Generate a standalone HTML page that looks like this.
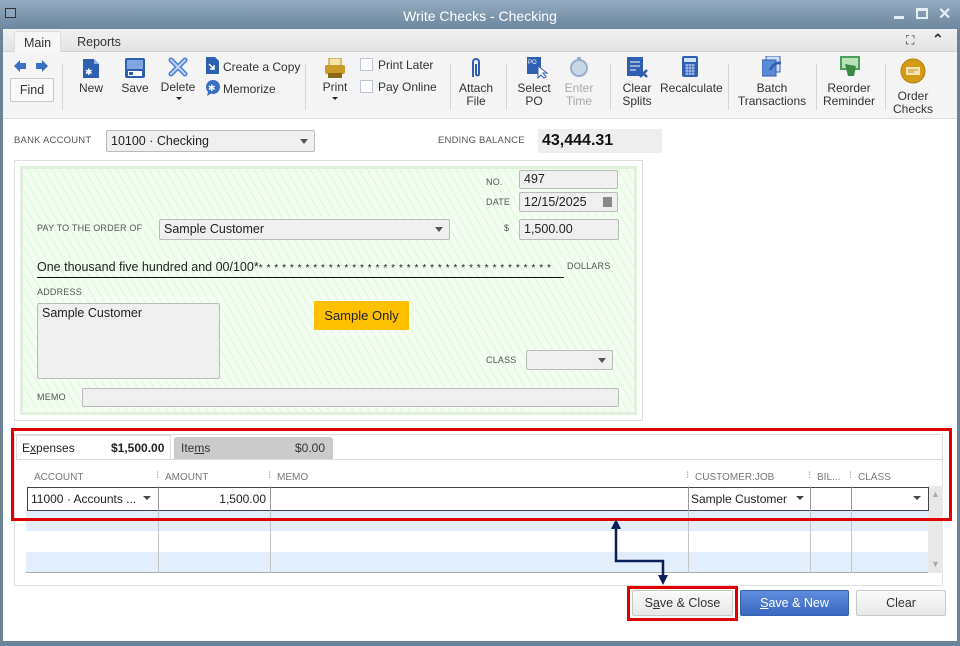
<!DOCTYPE html>
<html><head><meta charset="utf-8">
<style>
*{box-sizing:border-box;margin:0;padding:0}
body{width:960px;height:646px;overflow:hidden;font-family:"Liberation Sans",sans-serif;background:#6b8399;position:relative;font-size:12px;color:#222}
.abs{position:absolute}
#title{left:0;top:0;width:960px;height:29px;background:linear-gradient(#93abc0,#6d879e);color:#fff;font-size:14px;text-align:center;line-height:32px}
#win{left:3px;top:29px;width:954px;height:612px;background:#fff}
#tabs{left:0;top:0;width:954px;height:23px;background:linear-gradient(#f1f1f1,#e3e3e3);border-bottom:1px solid #c9d3dc}
.tab{position:absolute;top:2px;height:22px;font-size:12.5px;line-height:22px;text-align:center;color:#333}
#tb{left:0;top:23px;width:954px;height:67px;background:#f4f4f4;border-bottom:1px solid #ddd}
.lbl{position:absolute;font-size:12px;color:#333;text-align:center;line-height:13px}
.sep{position:absolute;top:12px;width:1px;height:46px;background:#d4d4d4}
.ic{position:absolute}
.small{font-size:9px;color:#555;position:absolute;letter-spacing:.2px}
.fld{position:absolute;background:#efefef;border:1px solid #bbb;border-radius:2px;font-size:12.5px;padding-left:4px;line-height:18px}
.dd{position:absolute;right:6px;top:7px;width:0;height:0;border-left:4px solid transparent;border-right:4px solid transparent;border-top:5px solid #555}
#check{left:11px;top:131px;width:629px;height:261px;border:1px solid #ddd;background:#fff}
#green{left:5px;top:5px;width:617px;height:249px;border:3px solid #e0f0dc;background:#f3fdf1;background-image:repeating-linear-gradient(60deg,transparent 0 6px,rgba(190,235,185,.35) 6px 7px);}
.btn{position:absolute;height:26px;border:1px solid #c8c8c8;border-radius:2px;background:linear-gradient(#fafafa,#e8e8e8);text-align:center;line-height:24px;font-size:12.5px;color:#333}
.hdr{position:absolute;top:469px;font-size:10px;color:#777}
</style></head><body>
<div id="title" class="abs">Write Checks - Checking</div>
<div class="abs" style="left:5px;top:8px;width:11px;height:10px;border:1px solid #333;background:#8ea6bb"></div>
<div class="abs" style="left:894px;top:16px;width:10px;height:3px;background:#e6edf3"></div>
<div class="abs" style="left:916px;top:8px;width:12px;height:11px;border:2px solid #e6edf3;border-top-width:3px"></div>
<div class="abs" style="left:938px;top:4px;color:#e6edf3;font-size:16px;font-weight:bold">✕</div>
<div id="win" class="abs">
 <div id="tabs" class="abs">
  <div class="tab" style="left:11px;width:47px;background:#f6f6f6;border:1px solid #ddd;border-bottom:none;border-radius:3px 3px 0 0">Main</div>
  <div class="tab" style="left:68px;width:56px">Reports</div>
  <div class="abs" style="left:903px;top:4px;font-size:12px;color:#333">⛶</div>
  <div class="abs" style="left:929px;top:2px;font-size:14px;color:#333;font-weight:bold">⌃</div>
 </div>
 <div id="tb" class="abs">
  <svg class="ic" style="left:11px;top:7px" width="36" height="14"><path d="M0 7 L6 1 V4 H12 V10 H6 V13Z" fill="#3a70c4"/><path d="M36 7 L30 1 V4 H24 V10 H30 V13Z" fill="#3a70c4" transform="translate(-2 0)"/></svg>
  <div class="btn" style="left:7px;top:26px;width:44px;height:24px;line-height:22px;background:#f8f8f8">Find</div>
  <div class="sep" style="left:59px"></div>
  <svg class="ic" style="left:79px;top:6px" width="18" height="21"><path d="M1 1H12L17 6V20H1Z" fill="#2f5fb0"/><path d="M12 1V6H17" fill="#8fb0e0"/><text x="3" y="17" fill="#fff" font-size="9">✱</text></svg>
  <div class="lbl" style="left:70px;top:30px;width:36px">New</div>
  <svg class="ic" style="left:122px;top:6px" width="20" height="20"><rect x="0" y="0" width="20" height="20" rx="2" fill="#2f5fb0"/><rect x="2" y="2" width="16" height="9" fill="#7fa6e0"/><rect x="3" y="13" width="14" height="5" fill="#fff"/><rect x="4" y="14" width="4" height="3" fill="#2f5fb0"/></svg>
  <div class="lbl" style="left:114px;top:30px;width:36px">Save</div>
  <svg class="ic" style="left:165px;top:5px" width="20" height="20"><path d="M3 3L17 17M17 3L3 17" stroke="#4a7fd0" stroke-width="5" stroke-linecap="round"/><path d="M3 3L17 17M17 3L3 17" stroke="#bcd3f5" stroke-width="2" stroke-linecap="round"/></svg>
  <div class="lbl" style="left:155px;top:29px;width:40px">Delete</div>
  <div class="dd" style="left:173px;top:45px;right:auto;border-width:3px 3px 0;border-top-color:#222"></div>
  <svg class="ic" style="left:201px;top:4px" width="16" height="19"><path d="M2 1H11L15 5V18H2Z" fill="#2f5fb0"/><path d="M5 8L10 13M10 9V13H6" stroke="#fff" stroke-width="1.5" fill="none"/></svg>
  <div class="lbl" style="left:220px;top:9px;text-align:left">Create a Copy</div>
  <svg class="ic" style="left:201px;top:27px" width="18" height="18"><circle cx="9" cy="8" r="7" fill="#3b6fc4"/><path d="M4 13L3 17L8 14" fill="#3b6fc4"/><text x="4" y="12" fill="#fff" font-size="9">✱</text></svg>
  <div class="lbl" style="left:220px;top:31px;text-align:left">Memorize</div>
  <div class="sep" style="left:302px"></div>
  <svg class="ic" style="left:322px;top:6px" width="20" height="21"><rect x="4" y="0" width="12" height="8" fill="#f4e6a8" stroke="#b08a20"/><rect x="0" y="7" width="20" height="9" rx="2" fill="#c79a2a"/><rect x="3" y="15" width="14" height="5" fill="#8a6a18"/></svg>
  <div class="lbl" style="left:314px;top:29px;width:36px">Print</div>
  <div class="dd" style="left:329px;top:45px;right:auto;border-width:3px 3px 0;border-top-color:#222"></div>
  <div class="abs" style="left:357px;top:6px;width:13px;height:13px;border:1px solid #bcc6d6;background:#fff"></div>
  <div class="lbl" style="left:375px;top:7px;text-align:left">Print Later</div>
  <div class="abs" style="left:357px;top:28px;width:13px;height:13px;border:1px solid #bcc6d6;background:#fff"></div>
  <div class="lbl" style="left:375px;top:29px;text-align:left">Pay Online</div>
  <div class="sep" style="left:447px"></div>
  <svg class="ic" style="left:467px;top:5px" width="12" height="22"><path d="M3 20V5a3 3 0 0 1 6 0V17a1.5 1.5 0 0 1-3 0V7" stroke="#2f5fb0" stroke-width="2" fill="none"/></svg>
  <div class="lbl" style="left:451px;top:30px;width:44px">Attach<br>File</div>
  <div class="sep" style="left:503px"></div>
  <svg class="ic" style="left:524px;top:5px" width="22" height="22"><rect x="0" y="0" width="14" height="17" fill="#2f5fb0"/><text x="1" y="7" fill="#fff" font-size="6">PO</text><path d="M11 9L11 21L14 18L17 21L19 20L16 16H20Z" fill="#fff" stroke="#2f5fb0"/></svg>
  <div class="lbl" style="left:513px;top:30px;width:36px">Select<br>PO</div>
  <svg class="ic" style="left:566px;top:5px" width="20" height="20"><circle cx="10" cy="11" r="8" fill="#c8d6e6" stroke="#98aec8" stroke-width="2"/><rect x="8" y="0" width="4" height="3" fill="#98aec8"/></svg>
  <div class="lbl" style="left:556px;top:30px;width:40px;color:#aaa">Enter<br>Time</div>
  <div class="sep" style="left:607px"></div>
  <svg class="ic" style="left:624px;top:5px" width="22" height="21"><rect x="0" y="0" width="16" height="19" fill="#2f5fb0"/><path d="M3 5H13M3 9H13M3 13H9" stroke="#fff"/><path d="M13 13L20 20M20 13L13 20" stroke="#2f5fb0" stroke-width="2.5"/></svg>
  <div class="lbl" style="left:614px;top:30px;width:40px">Clear<br>Splits</div>
  <svg class="ic" style="left:679px;top:4px" width="16" height="21"><rect x="0" y="0" width="16" height="21" rx="2" fill="#2f5fb0"/><rect x="2" y="2" width="12" height="4" fill="#cfe0fa"/><path d="M3 9H13M3 12H13M3 15H13M3 18H13M5 8V19M8 8V19M11 8V19" stroke="#cfe0fa" stroke-width=".8"/></svg>
  <div class="lbl" style="left:657px;top:30px;width:60px">Recalculate</div>
  <div class="sep" style="left:725px"></div>
  <svg class="ic" style="left:759px;top:4px" width="22" height="21"><rect x="4" y="0" width="14" height="16" fill="#cfe0fa" stroke="#2f5fb0"/><rect x="0" y="4" width="14" height="16" fill="#5b8bd8" stroke="#2f5fb0"/><path d="M8 14Q12 6 19 7" stroke="#2f5fb0" stroke-width="2.5" fill="none"/></svg>
  <div class="lbl" style="left:733px;top:30px;width:72px">Batch<br>Transactions</div>
  <div class="sep" style="left:813px"></div>
  <svg class="ic" style="left:837px;top:4px" width="20" height="21"><rect x="0" y="0" width="20" height="14" fill="#4aa05a"/><rect x="2" y="2" width="16" height="10" fill="#b8e2b8"/><path d="M5 8L8 20H14L16 10" fill="#3c8a46"/></svg>
  <div class="lbl" style="left:818px;top:30px;width:56px">Reorder<br>Reminder</div>
  <div class="sep" style="left:882px"></div>
  <svg class="ic" style="left:897px;top:6px" width="26" height="26"><circle cx="13" cy="13" r="12" fill="#d49b16" stroke="#b07f10"/><rect x="6" y="9" width="14" height="8" fill="#f6e4b4"/><path d="M8 12H18M8 14H14" stroke="#c89020"/></svg>
  <div class="lbl" style="left:883px;top:38px;width:54px">Order<br>Checks</div>
 </div>

 <div class="small" style="left:11px;top:106px;font-size:9.5px">BANK ACCOUNT</div>
 <div class="fld" style="left:103px;top:101px;width:209px;height:22px;line-height:20px">10100 · Checking<div class="dd" style="top:8px"></div></div>
 <div class="small" style="left:435px;top:106px;font-size:9.5px">ENDING BALANCE</div>
 <div class="abs" style="left:535px;top:100px;width:124px;height:24px;background:#eee;font-size:16px;font-weight:bold;line-height:24px;padding-left:4px;color:#111">43,444.31</div>

 <div id="check" class="abs">
  <div id="green" class="abs"></div>
  <div class="small" style="left:471px;top:16px">NO.</div>
  <div class="fld" style="left:504px;top:9px;width:99px;height:19px;line-height:17px">497</div>
  <div class="small" style="left:471px;top:36px">DATE</div>
  <div class="fld" style="left:504px;top:31px;width:99px;height:20px;line-height:18px">12/15/2025<span style="position:absolute;right:5px;top:4px;width:9px;height:10px;background:#888"></span></div>
  <div class="small" style="left:22px;top:62px">PAY TO THE ORDER OF</div>
  <div class="fld" style="left:144px;top:58px;width:291px;height:21px;line-height:19px">Sample Customer<div class="dd"></div></div>
  <div class="small" style="left:489px;top:62px">$</div>
  <div class="fld" style="left:504px;top:58px;width:100px;height:21px;line-height:19px">1,500.00</div>
  <div class="abs" style="left:22px;top:98px;width:527px;border-bottom:1px solid #111;font-size:12.5px;line-height:16px;white-space:nowrap;overflow:hidden">One thousand five hundred and 00/100*<span style="letter-spacing:3.9px;font-size:10px">**************************************</span></div>
  <div class="small" style="left:552px;top:100px">DOLLARS</div>
  <div class="small" style="left:22px;top:126px">ADDRESS</div>
  <div class="fld" style="left:22px;top:142px;width:183px;height:76px;line-height:18px">Sample Customer</div>
  <div class="abs" style="left:299px;top:140px;width:95px;height:29px;background:#ffc000;font-size:13px;line-height:29px;text-align:center;color:#222">Sample Only</div>
  <div class="small" style="left:471px;top:194px">CLASS</div>
  <div class="fld" style="left:511px;top:189px;width:87px;height:20px"><div class="dd"></div></div>
  <div class="small" style="left:22px;top:231px">MEMO</div>
  <div class="fld" style="left:67px;top:227px;width:537px;height:19px"></div>
 </div>

 <!-- tabs area -->
 <div class="abs" style="left:11px;top:405px;width:929px;height:152px;border:1px solid #ddd"></div>
 <div class="abs" style="left:13px;top:406px;width:155px;height:25px;background:#fff;border:1px solid #ddd;border-bottom:none;font-size:12px;line-height:24px;padding-left:5px;color:#222">E<u>x</u>penses<span style="position:absolute;left:94px;font-weight:bold">$1,500.00</span></div>
 <div class="abs" style="left:171px;top:408px;width:159px;height:22px;background:#cbcbcb;border-radius:3px 3px 0 0;font-size:12px;line-height:22px;padding-left:7px;color:#333">Ite<u>m</u>s<span style="position:absolute;left:121px">$0.00</span></div>
 <div class="abs" style="left:13px;top:430px;width:927px;border-top:1px solid #ddd"></div>
 <div class="hdr" style="left:31px;top:443px">ACCOUNT</div>
 <div class="hdr" style="left:153px;top:441px;color:#999">⁝</div>
 <div class="hdr" style="left:162px;top:443px">AMOUNT</div>
 <div class="hdr" style="left:265px;top:441px;color:#999">⁝</div>
 <div class="hdr" style="left:274px;top:443px">MEMO</div>
 <div class="hdr" style="left:683px;top:441px;color:#999">⁝</div>
 <div class="hdr" style="left:692px;top:443px">CUSTOMER:JOB</div>
 <div class="hdr" style="left:805px;top:441px;color:#999">⁝</div>
 <div class="hdr" style="left:814px;top:443px">BIL...</div>
 <div class="hdr" style="left:846px;top:441px;color:#999">⁝</div>
 <div class="hdr" style="left:855px;top:443px">CLASS</div>
 <!-- grid -->
 <div class="abs" style="left:23px;top:457px;width:902px;height:87px;border-bottom:1px solid #aaa;background:linear-gradient(#fff 0 24px,#e2eefc 24px 45px,#fff 45px 66px,#e2eefc 66px)"></div>
 <div class="abs" style="left:155px;top:457px;height:87px;border-left:1px solid #c4c4c4"></div>
 <div class="abs" style="left:267px;top:457px;height:87px;border-left:1px solid #c4c4c4"></div>
 <div class="abs" style="left:685px;top:457px;height:87px;border-left:1px solid #c4c4c4"></div>
 <div class="abs" style="left:807px;top:457px;height:87px;border-left:1px solid #c4c4c4"></div>
 <div class="abs" style="left:848px;top:457px;height:87px;border-left:1px solid #c4c4c4"></div>
 <div class="abs" style="left:925px;top:457px;width:15px;height:87px;background:#e8e8e8"></div>
 <div class="abs" style="left:928px;top:460px;font-size:9px;color:#aaa">▲</div>
 <div class="abs" style="left:928px;top:530px;font-size:9px;color:#aaa">▼</div>
 <div class="abs" style="left:24px;top:458px;width:902px;height:24px;border:1px solid #444;background:#fff"></div>
 <div class="abs" style="left:155px;top:458px;height:24px;border-left:1px solid #999"></div>
 <div class="abs" style="left:267px;top:458px;height:24px;border-left:1px solid #999"></div>
 <div class="abs" style="left:685px;top:458px;height:24px;border-left:1px solid #999"></div>
 <div class="abs" style="left:807px;top:458px;height:24px;border-left:1px solid #999"></div>
 <div class="abs" style="left:848px;top:458px;height:24px;border-left:1px solid #999"></div>
 <div class="abs" style="left:28px;top:463px;font-size:12px">11000 · Accounts ...</div>
 <div class="dd" style="left:140px;top:467px;right:auto;border-width:4px 4px 0;border-top-color:#444"></div>
 <div class="abs" style="left:160px;top:463px;width:103px;text-align:right;font-size:12px">1,500.00</div>
 <div class="abs" style="left:688px;top:463px;width:100px;overflow:hidden;white-space:nowrap;font-size:12px">Sample Customer</div>
 <div class="dd" style="left:793px;top:467px;right:auto;border-width:4px 4px 0;border-top-color:#444"></div>
 <div class="dd" style="left:910px;top:467px;right:auto;border-width:4px 4px 0;border-top-color:#444"></div>
 <!-- red boxes & arrow -->
 <div class="abs" style="left:8px;top:399px;width:941px;height:93px;border:3px solid #e00000"></div>
 <svg class="abs" style="left:600px;top:488px" width="70" height="70"><path d="M13 10V44H60V62" stroke="#0b1f5a" stroke-width="2.5" fill="none"/><path d="M8 12L13 2L18 12Z" fill="#0b1f5a"/><path d="M55 58L60 68L65 58Z" fill="#0b1f5a"/></svg>
 <div class="abs" style="left:624px;top:557px;width:111px;height:35px;border:3px solid #e00000"></div>
 <div class="btn" style="left:629px;top:561px;width:101px"><span>S<u>a</u>ve &amp; Close</span></div>
 <div class="btn" style="left:737px;top:561px;width:109px;background:linear-gradient(#5f8ede,#3a67c0);color:#fff;border-color:#3560b0"><u>S</u>ave &amp; New</div>
 <div class="btn" style="left:853px;top:561px;width:90px">Clear</div>
</div>
</body></html>
